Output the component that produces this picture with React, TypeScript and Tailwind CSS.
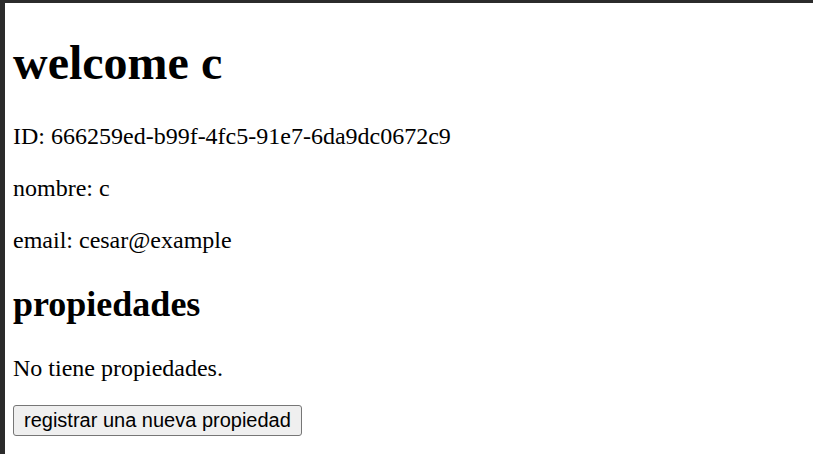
export default function App() {
  return (
    <div
      className="h-screen w-full overflow-hidden border-t-[3px] border-l-[5px] border-[#2b2b2b] bg-white pl-[8px] text-black"
      style={{ fontFamily: '"Liberation Serif", "Times New Roman", serif' }}
    >
      <div className="flex flex-col items-start">
        <h1 className="mt-[32px] text-[48px] leading-[55px] font-bold">welcome c</h1>
        <p className="mt-[32px] text-[24px] leading-[28px]">ID: 666259ed-b99f-4fc5-91e7-6da9dc0672c9</p>
        <p className="mt-[24px] text-[24px] leading-[28px]">nombre: c</p>
        <p className="mt-[24px] text-[24px] leading-[28px]">email: cesar@example</p>
        <h2 className="mt-[30px] text-[36px] leading-[41px] font-bold">propiedades</h2>
        <p className="mt-[29px] text-[24px] leading-[28px]">No tiene propiedades.</p>
        <button
          type="button"
          className="mt-[23px] rounded-[3px] border border-[#767676] bg-[#efefef] px-[10px] py-[2px] text-[20px] leading-[25px] text-black"
          style={{ fontFamily: '"Liberation Sans", Arial, sans-serif' }}
        >
          registrar una nueva propiedad
        </button>
      </div>
    </div>
  );
}
